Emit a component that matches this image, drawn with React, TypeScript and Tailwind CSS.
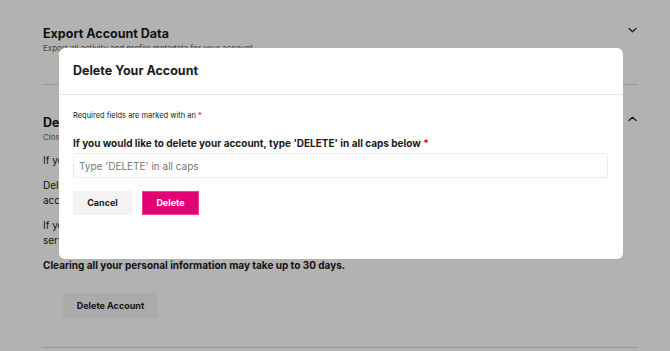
import React from 'react';

function Chevron({ up = false }: { up?: boolean }) {
  return (
    <svg width="9" height="6" viewBox="0 0 9 6" fill="none" className="shrink-0">
      <path d={up ? 'M1 4.5L4.5 1.2L8 4.5' : 'M1 1.5L4.5 4.8L8 1.5'} stroke="#222" strokeWidth="1.2" strokeLinecap="round" strokeLinejoin="round" />
    </svg>
  );
}

export default function App() {
  return (
    <div className="relative w-[670px] h-[351px] overflow-hidden bg-white text-[#1a1a1a]" style={{ fontFamily: 'Inter, "Noto Sans", sans-serif' }}>
      {/* page behind the dialog */}
      <div className="ml-[43px] w-[595px] pt-[26px]">
        <div className="flex items-start justify-between">
          <div>
            <h2 className="text-[12.5px] font-bold leading-[16px]">Export Account Data</h2>
            <p className="text-[8px] leading-[12px] text-[#666]">Export all activity and profile metadata for your account</p>
          </div>
          <div className="pt-[1px] pr-[1px]"><Chevron /></div>
        </div>
        <div className="mt-[30px] border-t border-[#d9d9d9]" />

        <div className="flex items-start justify-between mt-[30px]">
          <div>
            <h2 className="text-[12.5px] font-bold leading-[16px]">Delete Account Data</h2>
            <p className="text-[8px] leading-[12px] text-[#666]">Close your account and remove your personal information</p>
          </div>
          <div className="pt-[1px] pr-[1px]"><Chevron up /></div>
        </div>
        <div className="mt-[10px] text-[10px] leading-[15px] space-y-[10px]">
          <p>If you delete your account, you will no longer be able to sign in.</p>
          <p>Deleting your account removes your profile, saved preferences and activity from your<br />account history across all of our services.</p>
          <p>If you have an active subscription, cancel it before deleting your account to avoid charges from the<br />service provider.</p>
          <p className="font-bold">Clearing all your personal information may take up to 30 days.</p>
        </div>
        <button className="ml-[20px] mt-[20px] h-[25px] w-[95px] bg-[#f5f5f5] text-[9px] font-bold">Delete Account</button>
        <div className="mt-[29px] border-t border-[#d9d9d9]" />
      </div>

      {/* overlay */}
      <div className="absolute inset-0 bg-black/30" />

      {/* dialog */}
      <div className="absolute left-[59px] top-[48px] w-[564px] h-[211px] bg-white rounded-[6px]">
        <div className="h-[47px] flex items-center px-[14px] border-b border-[#e6e6e6]">
          <h1 className="text-[12.5px] font-bold">Delete Your Account</h1>
        </div>
        <div className="px-[14px]">
          <p className="mt-[15px] text-[7.5px] leading-[12px]">Required fields are marked with an <span className="text-[#e0001b]">*</span></p>
          <label className="block mt-[14px] text-[10px] font-bold leading-[14px]">
            If you would like to delete your account, type 'DELETE' in all caps below <span className="text-[#e0001b]">*</span>
          </label>
          <input
            className="mt-[3px] w-[535px] h-[25px] border border-[#ececec] rounded-[3px] px-[5px] text-[10px] outline-none placeholder:text-[#777]"
            placeholder="Type 'DELETE' in all caps"
          />
          <div className="flex gap-[10px] mt-[13px]">
            <button className="h-[24px] w-[59px] bg-[#f3f3f3] text-[9px] font-bold">Cancel</button>
            <button className="h-[24px] w-[57px] bg-[#e20074] border border-[#f0409a] text-white text-[9px] font-bold">Delete</button>
          </div>
        </div>
      </div>
    </div>
  );
}
